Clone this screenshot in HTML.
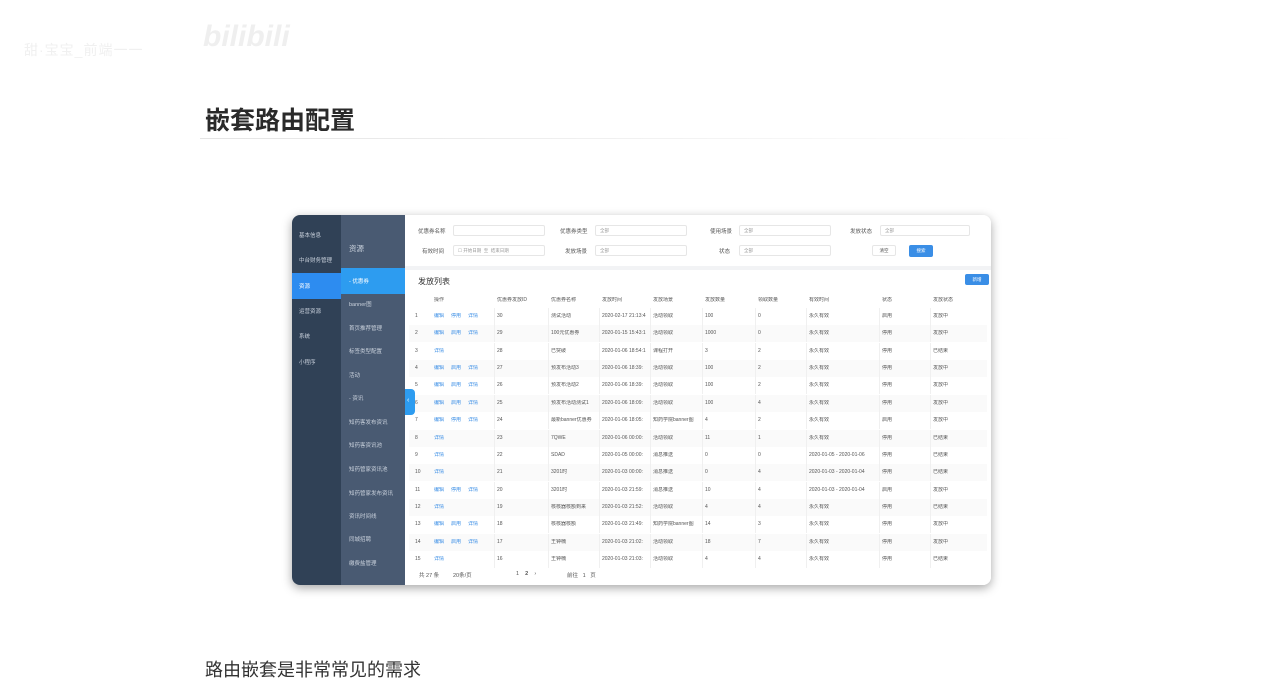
<!DOCTYPE html>
<html><head><meta charset="utf-8">
<style>
*{margin:0;padding:0;box-sizing:border-box}
body{width:1280px;height:698px;background:#fff;position:relative;overflow:hidden;font-family:"Liberation Sans","Noto Sans CJK SC",sans-serif;color:#333}
.a{position:absolute;white-space:nowrap}
.wm{color:#f0f0f0;font-size:14px}
h1{position:absolute;left:205px;top:105px;font-size:25px;font-weight:bold;color:#2a2a2a;line-height:32px}
.line{position:absolute;left:200px;top:138px;width:880px;height:1px;background:linear-gradient(90deg,#e4e4e4,#f4f4f4 60%,#fff)}
.frame{position:absolute;left:292px;top:215px;width:699px;height:370px;border-radius:8px;overflow:hidden;box-shadow:0 3px 10px rgba(0,0,0,.35);background:#fff}
.s1{position:absolute;left:0;top:0;width:49px;height:370px;background:#304156}
.s2{position:absolute;left:49px;top:0;width:64px;height:370px;background:#495a72}
.s1 div,.s2 div{position:absolute;color:#c9d1dc;font-size:5.5px}
.main{position:absolute;left:113px;top:0;right:0;bottom:0;background:#fff}
.f{font-size:5.5px;color:#555}
.inp{position:absolute;height:11px;border:1px solid #e6e6e6;border-radius:2px;font-size:4.5px;color:#999;padding:2px 4px}
.t{font-size:5px;color:#555;line-height:7px}
.bl{color:#3a8ee6}
.row{position:absolute;left:4px;right:4px;height:17px}
</style></head><body>
<div class="a wm" style="left:24px;top:40px;letter-spacing:1px">甜·宝宝_前端一一</div>
<div class="a" style="left:203px;top:20px;font-size:30px;font-weight:bold;color:#efefef;font-style:italic">bilibili</div>
<h1>嵌套路由配置</h1>
<div class="line"></div>

<div class="frame">
 <div class="s1">
  <div style="left:7px;top:16px">基本信息</div>
  <div style="left:7px;top:41px">中台财务管理</div>
  <div style="left:0;top:58px;width:49px;height:26px;background:#2d8cf0"></div>
  <div style="left:7px;top:67px;color:#fff">资源</div>
  <div style="left:7px;top:92px">运营资源</div>
  <div style="left:7px;top:117px">系统</div>
  <div style="left:7px;top:143px">小程序</div>
 </div>
 <div class="s2">
  <div style="left:8px;top:28px;font-size:7.5px">资源</div>
  <div style="left:0;top:53px;width:64px;height:26px;background:#2d9cf0"></div>
  <div style="left:8px;top:62px;color:#fff">- 优惠券</div>
  <div style="left:8px;top:85px">banner图</div>
  <div style="left:8px;top:109px">首页推荐管理</div>
  <div style="left:8px;top:132px">标签类型配置</div>
  <div style="left:8px;top:156px">活动</div>
  <div style="left:8px;top:179px">- 资讯</div>
  <div style="left:8px;top:203px">知药客发布资讯</div>
  <div style="left:8px;top:226px">知药客资讯池</div>
  <div style="left:8px;top:250px">知药管家资讯池</div>
  <div style="left:8px;top:274px">知药管家发布资讯</div>
  <div style="left:8px;top:297px">资讯时间线</div>
  <div style="left:8px;top:320px">同城招聘</div>
  <div style="left:8px;top:344px">缴费盐管理</div>
 </div>
 <div class="a" style="left:113px;top:174px;width:10px;height:26px;background:#2d9cf0;border-radius:0 4px 4px 0;z-index:3;color:#fff;font-size:7px;padding:8px 2px">‹</div>
 <div class="main">
  <div class="a f" style="left:13px;top:12px">优惠券名称</div>
  <div class="inp" style="left:48px;top:10px;width:92px"></div>
  <div class="a f" style="left:155px;top:12px">优惠券类型</div>
  <div class="inp" style="left:190px;top:10px;width:92px">全部</div>
  <div class="a f" style="left:305px;top:12px">使用场景</div>
  <div class="inp" style="left:334px;top:10px;width:92px">全部</div>
  <div class="a f" style="left:445px;top:12px">发放状态</div>
  <div class="inp" style="left:475px;top:10px;width:90px">全部</div>
  <div class="a f" style="left:17px;top:32px">有效时间</div>
  <div class="inp" style="left:48px;top:30px;width:92px">☐ 开始日期 &nbsp;至 &nbsp;结束日期</div>
  <div class="a f" style="left:160px;top:32px">发放场景</div>
  <div class="inp" style="left:190px;top:30px;width:92px">全部</div>
  <div class="a f" style="left:314px;top:32px">状态</div>
  <div class="inp" style="left:334px;top:30px;width:92px">全部</div>
  <div class="inp" style="left:467px;top:30px;width:24px;color:#555;text-align:center;padding:2px 0">清空</div>
  <div class="a" style="left:504px;top:30px;width:24px;height:12px;background:#3a8ee6;border-radius:2px;color:#fff;font-size:4.5px;text-align:center;line-height:12px">搜索</div>
  <div class="a" style="left:0;top:51px;width:586px;height:4px;background:#f2f3f5"></div>
  <div class="a" style="left:13px;top:61px;font-size:8px;color:#333">发放列表</div>
  <div class="a" style="left:560px;top:59px;width:24px;height:11px;background:#3a8ee6;border-radius:2px;color:#fff;font-size:4.5px;text-align:center;line-height:11px">新增</div>
  <div id="tb"></div>
  <div class="a" style="left:14px;top:356px;font-size:5.5px;color:#555">共 27 条</div>
  <div class="a" style="left:48px;top:356px;font-size:5.5px;color:#555">20条/页</div>
  <div class="a" style="left:111px;top:356px;font-size:5.5px;color:#555">1 &nbsp;&nbsp;&nbsp;<b>2</b> &nbsp;&nbsp;&nbsp;›</div>
  <div class="a" style="left:162px;top:356px;font-size:5.5px;color:#555">前往 &nbsp;&nbsp;1 &nbsp;&nbsp;页</div>
 </div>
</div>

<div class="a" style="left:205px;top:656px;font-size:18px;color:#333">路由嵌套是非常常见的需求</div>

<script>
var cols=[10,29,92,146,197,248,300,353,404,477,528];
var hd=["","操作","优惠券发放ID","优惠券名称","发放时间","发放场景","发放数量","领取数量","有效时间","状态","发放状态"];
var d=[
["1","编辑 停用 详情","30","测试活动","2020-02-17 21:13:4","活动领取","100","0","永久有效","启用","发放中"],
["2","编辑 启用 详情","29","100元优惠券","2020-01-15 15:43:1","活动领取","1000","0","永久有效","停用","发放中"],
["3","详情","28","已突破","2020-01-06 18:54:1","课程打开","3","2","永久有效","停用","已结束"],
["4","编辑 启用 详情","27","预发布活动3","2020-01-06 18:39:","活动领取","100","2","永久有效","停用","发放中"],
["5","编辑 启用 详情","26","预发布活动2","2020-01-06 18:39:","活动领取","100","2","永久有效","停用","发放中"],
["6","编辑 启用 详情","25","预发布活动测试1","2020-01-06 18:09:","活动领取","100","4","永久有效","停用","发放中"],
["7","编辑 停用 详情","24","最新banner优惠券","2020-01-06 18:05:","知药学院banner图","4","2","永久有效","启用","发放中"],
["8","详情","23","7QWE","2020-01-06 00:00:","活动领取","11","1","永久有效","停用","已结束"],
["9","详情","22","SDAD","2020-01-05 00:00:","消息推送","0","0","2020-01-05 - 2020-01-06","停用","已结束"],
["10","详情","21","3201时","2020-01-03 00:00:","消息推送","0","4","2020-01-03 - 2020-01-04","停用","已结束"],
["11","编辑 停用 详情","20","3201时","2020-01-03 21:59:","消息推送","10","4","2020-01-03 - 2020-01-04","启用","发放中"],
["12","详情","19","核核器核额到来","2020-01-03 21:52:","活动领取","4","4","永久有效","停用","已结束"],
["13","编辑 启用 详情","18","核核器核额","2020-01-03 21:49:","知药学院banner图","14","3","永久有效","停用","发放中"],
["14","编辑 启用 详情","17","王钟楠","2020-01-03 21:02:","活动领取","18","7","永久有效","停用","发放中"],
["15","详情","16","王钟楠","2020-01-03 21:03:","活动领取","4","4","永久有效","停用","已结束"]];
var h="";
function rowHTML(r,top,bg,isHd){
 var s='<div class="row" style="top:'+top+'px;background:'+bg+'">';
 for(var i=0;i<cols.length;i++){
  var txt=r[i];
  if(i==1&&!isHd){txt=txt.split(" ").map(function(x){return '<span class="bl" style="margin-right:7px">'+x+'</span>'}).join("");}
  s+='<div class="a t" style="left:'+(cols[i]-4)+'px;top:5px;height:7px;max-width:'+((cols[i+1]||590)-cols[i]-2)+'px;overflow:hidden">'+txt+'</div>';
  if(i>=2&&!isHd)s+='<div class="a" style="left:'+(cols[i]-7)+'px;top:0;width:1px;height:17px;background:#f0f0f0"></div>';
 }
 return s+'</div>';
}
h+=rowHTML(hd,77,"#fff",true);
for(var k=0;k<d.length;k++)h+=rowHTML(d[k],93+k*17.36,k%2?"#fafafa":"#fff",false);
document.getElementById("tb").innerHTML=h;
</script>
</body></html>
